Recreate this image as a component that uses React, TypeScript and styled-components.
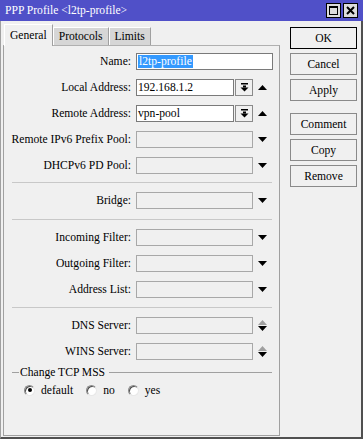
import React from "react";
import styled, { createGlobalStyle } from "styled-components";

const GlobalStyle = createGlobalStyle`
  html, body {
    margin: 0;
    padding: 0;
    background: #f0f0f0;
  }
  body {
    font-family: "Liberation Serif", "Times New Roman", serif;
    font-size: 11.6px;
    color: #000;
  }
`;

const Window = styled.div`
  width: 363px;
  height: 439px;
  display: flex;
  flex-direction: column;
  background: #f0f0f0;
`;

const TitleBar = styled.div`
  height: 21px;
  flex: none;
  display: flex;
  align-items: center;
  justify-content: space-between;
  background: #5050c8;
  padding: 0 5px 0 5px;
`;

const TitleText = styled.div`
  color: #fff;
  font-size: 11.6px;
  white-space: nowrap;
`;

const TitleButtons = styled.div`
  display: flex;
  gap: 2px;
`;

const TitleBtn = styled.div`
  width: 13px;
  height: 13px;
  border: 1px solid #000;
  background: #dcdcdc;
  display: flex;
  align-items: center;
  justify-content: center;
`;

const Frame = styled.div`
  flex: 1;
  display: flex;
  border-left: 1px solid #a0a0a0;
  border-right: 2px solid #505050;
  border-bottom: 2px solid #505050;
  padding: 3px 0 1px 2px;
  min-height: 0;
`;

const Main = styled.div`
  width: 277px;
  display: flex;
  flex-direction: column;
`;

const TabStrip = styled.div`
  display: flex;
  align-items: flex-end;
  height: 21px;
  padding-left: 1px;
  position: relative;
  z-index: 1;
`;

const Tab = styled.div<{ $active?: boolean }>`
  height: ${(p) => (p.$active ? 22 : 18)}px;
  box-sizing: border-box;
  padding: 0 5px;
  display: flex;
  align-items: center;
  background: ${(p) => (p.$active ? "#f0f0f0" : "#d6d6d6")};
  border-top: 1px solid #fff;
  border-left: 1px solid #fff;
  border-right: 1px solid #a0a0a0;
  margin-bottom: ${(p) => (p.$active ? -1 : 0)}px;
`;

const Panel = styled.div`
  flex: 1;
  border: 1px solid #a0a0a0;
  border-top-color: #b0b0b0;
  display: flex;
  flex-direction: column;
  gap: 9px;
  padding-top: 7px;
`;

const Row = styled.div`
  display: flex;
  align-items: center;
  height: 17px;
`;

const Label = styled.div`
  width: 127px;
  text-align: right;
  white-space: nowrap;
  margin-right: 5px;
`;

const Field = styled.div<{ $w: number; $filled?: boolean }>`
  width: ${(p) => p.$w}px;
  height: 17px;
  box-sizing: border-box;
  border: 1px solid ${(p) => (p.$filled ? "#7a7a7a" : "#a8a8a8")};
  background: ${(p) => (p.$filled ? "#fff" : "#f0f0f0")};
  display: flex;
  align-items: center;
  padding-left: 1px;
  white-space: nowrap;
  overflow: hidden;
`;

const Selected = styled.span`
  background: #3399ff;
  color: #fff;
  padding: 0 1px;
`;

const DropButton = styled.div`
  width: 18px;
  height: 17px;
  box-sizing: border-box;
  margin-left: 1px;
  border: 1px solid #8a8a8a;
  background: #f0f0f0;
  display: flex;
  align-items: center;
  justify-content: center;
`;

const ArrowSlot = styled.div`
  width: 18px;
  height: 17px;
  display: flex;
  align-items: center;
  justify-content: center;
`;

const Separator = styled.div<{ $lift?: number }>`
  height: 1px;
  background: #c8c8c8;
  margin: ${(p) => -(p.$lift || 0)}px 7px 0 8px;
`;

const GroupHead = styled.div`
  display: flex;
  align-items: center;
  margin: -4px 7px 0 8px;
  height: 14px;
  &::before {
    content: "";
    width: 7px;
    height: 1px;
    background: #a0a0a0;
    margin-right: 1px;
  }
  &::after {
    content: "";
    flex: 1;
    height: 1px;
    background: #a0a0a0;
    margin-left: 4px;
  }
`;

const RadioRow = styled.div`
  display: flex;
  align-items: center;
  padding-left: 20px;
  margin-top: -5px;
  height: 14px;
`;

const RadioItem = styled.label`
  display: flex;
  align-items: center;
  margin-right: 13px;
`;

const RadioDot = styled.span<{ $on?: boolean }>`
  width: 11px;
  height: 11px;
  box-sizing: border-box;
  border-radius: 50%;
  border: 1px solid #8a8a8a;
  border-right-color: #e8e8e8;
  border-bottom-color: #e8e8e8;
  background: #fff;
  box-shadow: inset 1px 1px 0 #505050;
  margin-right: 6px;
  display: flex;
  align-items: center;
  justify-content: center;
  &::after {
    content: "";
    display: ${(p) => (p.$on ? "block" : "none")};
    width: 4px;
    height: 4px;
    border-radius: 50%;
    background: #000;
  }
`;

const ButtonColumn = styled.div`
  width: 67px;
  margin-left: 10px;
  margin-top: 3px;
  display: flex;
  flex-direction: column;
  gap: 4px;
`;

const DialogButton = styled.button<{ $default?: boolean; $spaced?: boolean }>`
  height: 22px;
  box-sizing: border-box;
  border: 1px solid ${(p) => (p.$default ? "#000" : "#8a8a8a")};
  background: #f0f0f0;
  font-family: "Liberation Serif", "Times New Roman", serif;
  font-size: 11.6px;
  color: #000;
  padding: 0;
  margin-top: ${(p) => (p.$spaced ? 8 : 0)}px;
`;

const DownTri = () => (
  <svg width="9" height="5" viewBox="0 0 9 5">
    <polygon points="0,0 9,0 4.5,5" fill="#000" />
  </svg>
);

const UpTri = () => (
  <svg width="9" height="5" viewBox="0 0 9 5">
    <polygon points="0,5 9,5 4.5,0" fill="#000" />
  </svg>
);

const Spin = () => (
  <svg width="9" height="11" viewBox="0 0 9 11">
    <polygon points="0,5 9,5 4.5,0" fill="#a0a0a0" />
    <polygon points="0,6 9,6 4.5,11" fill="#000" />
  </svg>
);

const DropIcon = () => (
  <svg width="9" height="9" viewBox="0 0 9 9">
    <rect x="1" y="0" width="7" height="1.5" fill="#000" />
    <rect x="3" y="2.5" width="3" height="2" fill="#000" />
    <polygon points="0.5,4.5 8.5,4.5 4.5,8.5" fill="#000" />
  </svg>
);

type Arrow = "down" | "up" | "spin";

function EmptyRow({ label, arrow }: { label: string; arrow: Arrow }) {
  return (
    <Row>
      <Label>{label}</Label>
      <Field $w={117} />
      <ArrowSlot>{arrow === "spin" ? <Spin /> : arrow === "up" ? <UpTri /> : <DownTri />}</ArrowSlot>
    </Row>
  );
}

function PoolRow({ label, value }: { label: string; value: string }) {
  return (
    <Row>
      <Label>{label}</Label>
      <Field $w={98} $filled>
        {value}
      </Field>
      <DropButton>
        <DropIcon />
      </DropButton>
      <ArrowSlot>
        <UpTri />
      </ArrowSlot>
    </Row>
  );
}

export default function App() {
  return (
    <>
      <GlobalStyle />
      <Window>
        <TitleBar>
          <TitleText>PPP Profile &lt;l2tp-profile&gt;</TitleText>
          <TitleButtons>
            <TitleBtn>
              <svg width="9" height="9" viewBox="0 0 9 9">
                <rect x="0.5" y="0.5" width="8" height="8" fill="none" stroke="#000" />
                <rect x="0" y="0" width="9" height="2" fill="#000" />
              </svg>
            </TitleBtn>
            <TitleBtn>
              <svg width="9" height="9" viewBox="0 0 9 9">
                <path d="M1 1 L8 8 M8 1 L1 8" stroke="#000" strokeWidth="2" />
              </svg>
            </TitleBtn>
          </TitleButtons>
        </TitleBar>
        <Frame>
          <Main>
            <TabStrip>
              <Tab $active>General</Tab>
              <Tab>Protocols</Tab>
              <Tab>Limits</Tab>
            </TabStrip>
            <Panel>
              <Row>
                <Label>Name:</Label>
                <Field $w={137} $filled>
                  <Selected>l2tp-profile</Selected>
                </Field>
              </Row>
              <PoolRow label="Local Address:" value="192.168.1.2" />
              <PoolRow label="Remote Address:" value="vpn-pool" />
              <EmptyRow label="Remote IPv6 Prefix Pool:" arrow="down" />
              <EmptyRow label="DHCPv6 PD Pool:" arrow="down" />
              <Separator $lift={1} />
              <EmptyRow label="Bridge:" arrow="down" />
              <Separator $lift={-1} />
              <EmptyRow label="Incoming Filter:" arrow="down" />
              <EmptyRow label="Outgoing Filter:" arrow="down" />
              <EmptyRow label="Address List:" arrow="down" />
              <Separator />
              <EmptyRow label="DNS Server:" arrow="spin" />
              <EmptyRow label="WINS Server:" arrow="spin" />
              <GroupHead>Change TCP MSS</GroupHead>
              <RadioRow>
                <RadioItem>
                  <RadioDot $on />
                  default
                </RadioItem>
                <RadioItem>
                  <RadioDot />
                  no
                </RadioItem>
                <RadioItem>
                  <RadioDot />
                  yes
                </RadioItem>
              </RadioRow>
            </Panel>
          </Main>
          <ButtonColumn>
            <DialogButton $default>OK</DialogButton>
            <DialogButton>Cancel</DialogButton>
            <DialogButton>Apply</DialogButton>
            <DialogButton $spaced>Comment</DialogButton>
            <DialogButton>Copy</DialogButton>
            <DialogButton>Remove</DialogButton>
          </ButtonColumn>
        </Frame>
      </Window>
    </>
  );
}
